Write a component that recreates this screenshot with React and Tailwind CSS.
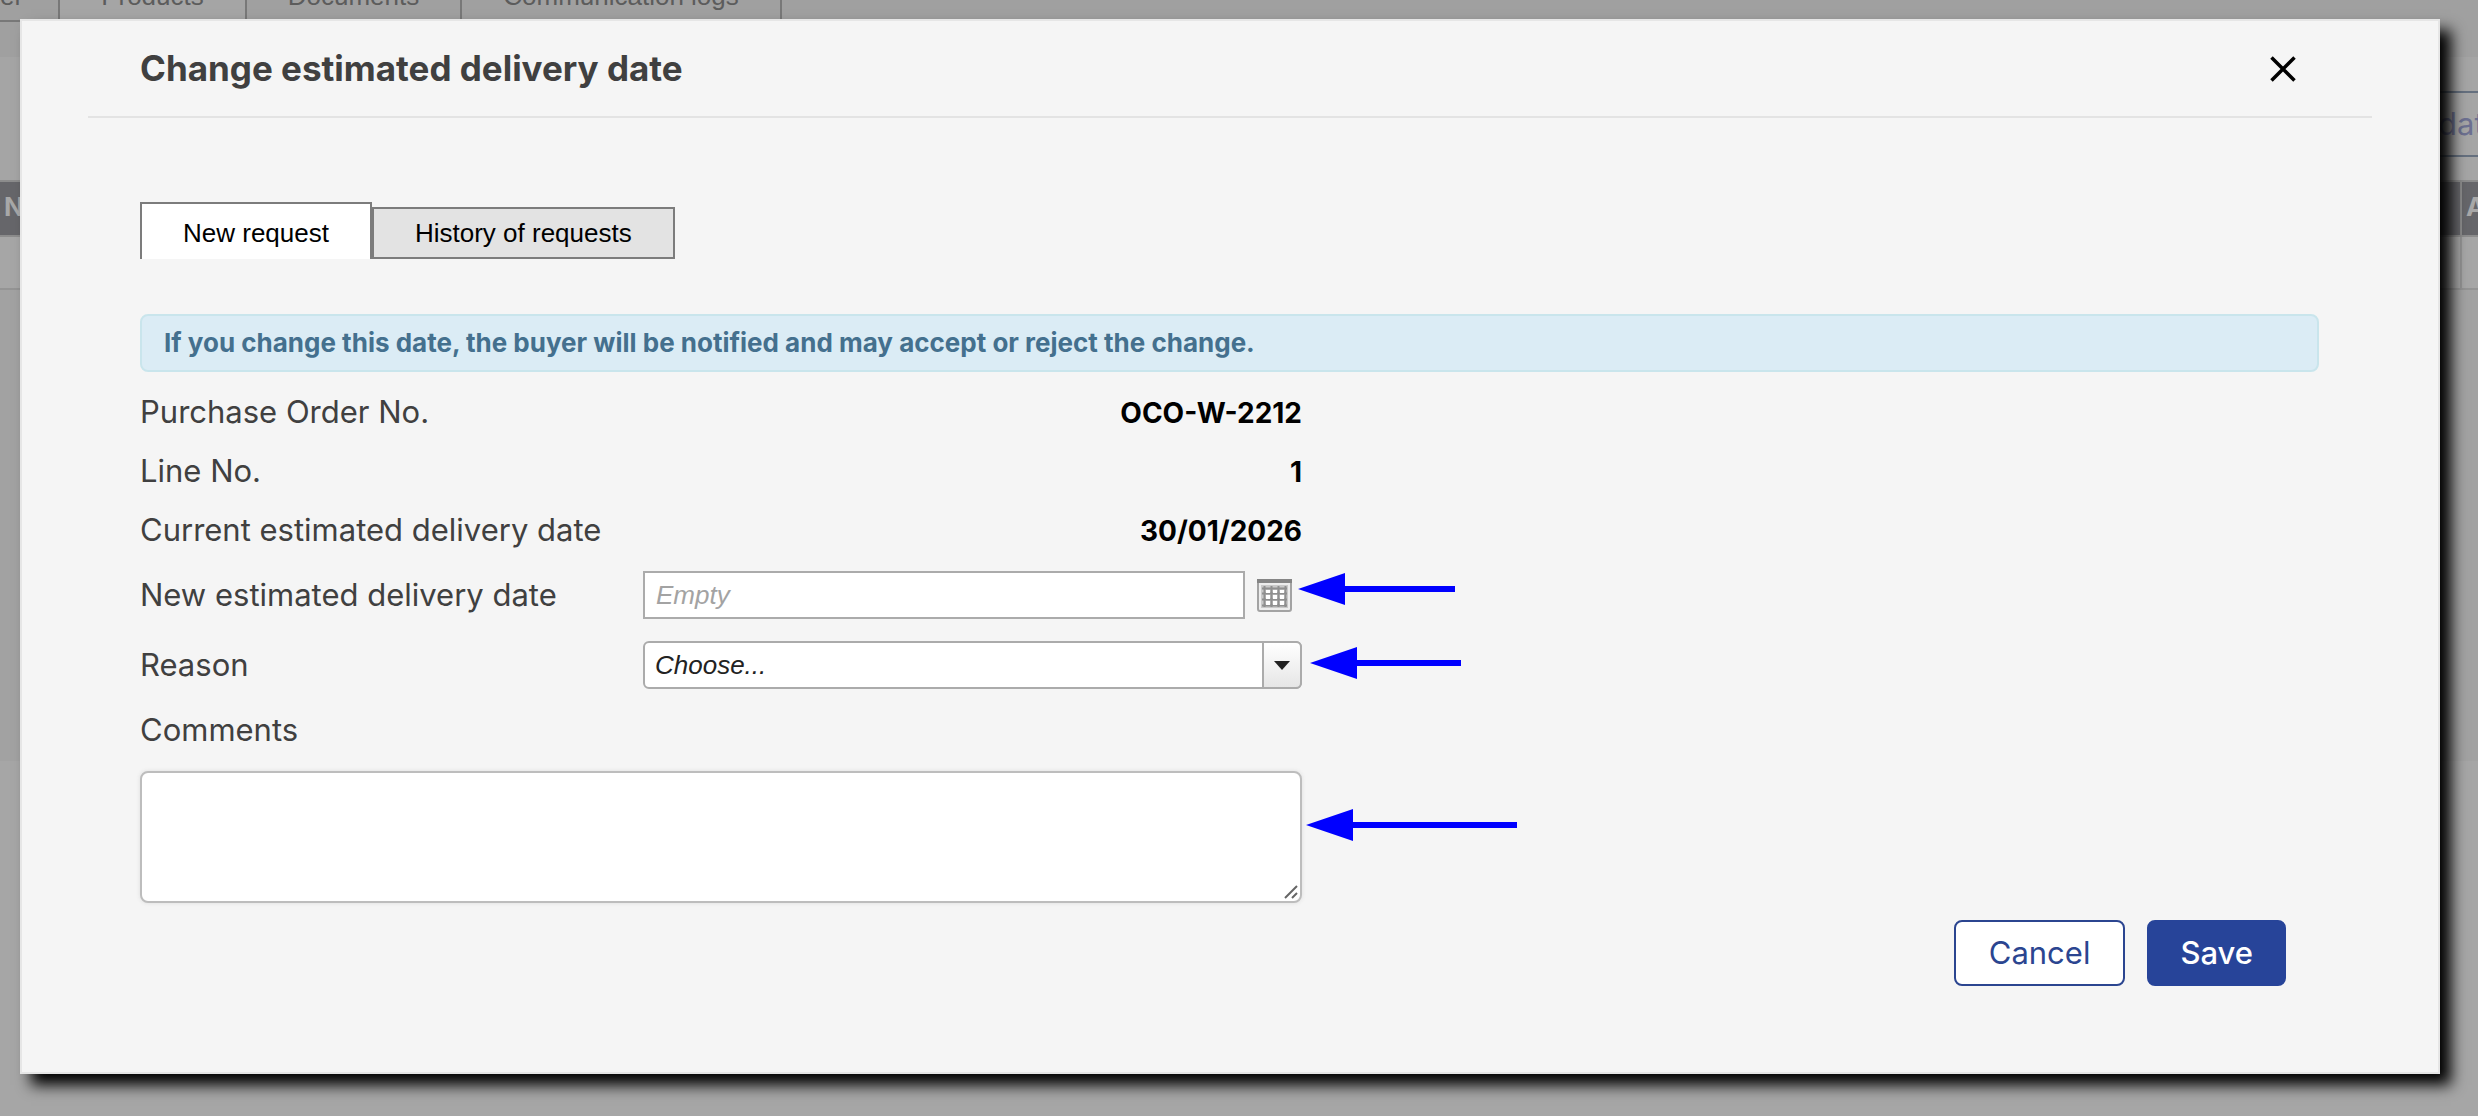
import { useState } from "react";

function Arrow({ width }) {
    return (
        <svg width={width} height="32" className="block" aria-hidden="true">
            <path d={`M0 16 L47 0 V13 H${width} V19 H47 V32 Z`} fill="#0000ff" />
        </svg>
    );
}

function CalendarIcon() {
    return (
        <svg width="35" height="33" viewBox="0 0 35 33" aria-hidden="true">
            <rect x="1" y="1" width="33" height="31" rx="2" fill="#ededed" stroke="#a3a3a3" strokeWidth="2" />
            <rect x="0" y="0" width="35" height="4" fill="#858585" />
            <rect x="4" y="6" width="27" height="23" fill="#c9c9c9" />
            <path d="M5 9.5H30M5 14.5H30M5 20.5H30M5 26.5H30M7.500 7V28M14.500 7V28M21.500 7V28M28.500 7V28" stroke="#8f8f8f" strokeWidth="2" />
            <path d="M9 11h4v3H9zM16 11h4v3h-4zM23 11h4v3h-4zM9 16h4v4H9zM16 16h4v4h-4zM23 16h4v4h-4zM9 22h4v4H9zM16 22h4v4h-4zM23 22h4v4h-4z" fill="#fff" />
        </svg>
    );
}

function InfoRow({ label, value }) {
    return (
        <div className="flex h-[59px] items-center justify-between">
            <dt>{label}</dt>
            <dd className="text-[28px] font-bold text-black">{value}</dd>
        </div>
    );
}

function BackgroundPage() {
    return (
        <div className="min-h-screen overflow-hidden bg-[#a6a6a6]" aria-hidden="true">
            <div className="h-[761px] bg-[#a2a2a2]">
                <div className="h-[57px] bg-[#a0a0a0]">
                    <div className="flex h-[22px] items-end overflow-hidden font-['Liberation_Sans',sans-serif] text-[26px] leading-[30px] text-[#5c5c5c]">
                        <div className="border-r-2 border-b-2 border-[#787878] pr-[35px] pb-[9px]">er</div>
                        <div className="border-r-2 border-[#787878] bg-[#a5a5a5] px-[41px] pb-[11px]">Products</div>
                        <div className="border-r-2 border-[#787878] px-[41px] pb-[11px]">Documents</div>
                        <div className="border-r-2 border-[#787878] px-[41px] pb-[11px]">Communication logs</div>
                    </div>
                </div>
                <div className="flex h-[123px] justify-end bg-[#a5a5a5] pt-[34px]">
                    <div className="h-[66px] w-[60px] overflow-hidden border-y-2 border-[#65707f] pl-5 text-[31px] leading-[62px] text-[#6d7191]">
                        dat
                    </div>
                </div>
                <table className="w-full table-fixed border-collapse">
                    <thead>
                        <tr className="h-[55px] border-y-2 border-[#8c8c8c] bg-[#66666a] text-left text-[26px] leading-8 text-[#a8a8a8]">
                            <th className="overflow-hidden pb-1 pl-1 font-bold">N</th>
                            <th className="w-[17px] overflow-hidden border-l-2 border-[#8c8c8c] pb-1 pl-1 font-bold">A</th>
                        </tr>
                    </thead>
                    <tbody>
                        <tr className="h-[53px] border-b-2 border-[#949494] bg-[#a6a6a6]">
                            <td></td>
                            <td className="border-l-2 border-[#949494]"></td>
                        </tr>
                    </tbody>
                </table>
            </div>
        </div>
    );
}

export default function App() {
    const [date, setDate] = useState("");
    const [comments, setComments] = useState("");

    return (
        <div className="relative overflow-hidden font-[Inter,sans-serif]">
            <BackgroundPage />

            <div className="absolute inset-0 pt-[19px] pr-[38px] pl-5">
                <div
                    role="dialog"
                    aria-labelledby="dialog-title"
                    className="border-2 border-[#e6e6e6] bg-[#f5f5f5] px-[66px] pb-[86px] text-[#404040] shadow-[11px_11px_14px_#000]"
                >
                    <header className="flex h-[97px] items-center justify-between border-b-2 border-[#e3e3e3] pr-[76px] pl-[52px]">
                        <h1 id="dialog-title" className="text-[35px] font-bold">Change estimated delivery date</h1>
                        <button type="button" aria-label="Close" className="text-black">
                            <svg width="26" height="26" viewBox="0 0 26 26" aria-hidden="true">
                                <path d="M1.500 1.500L24.500 24.500M24.500 1.500L1.500 24.500" stroke="currentColor" strokeWidth="3.500" />
                            </svg>
                        </button>
                    </header>

                    <div className="pr-[53px] pl-[52px]">
                        <div role="tablist" className="mt-[84px] flex items-end font-['Liberation_Sans',sans-serif] text-[26px] text-black">
                            <button type="button" role="tab" aria-selected="true" className="h-[57px] border-2 border-b-0 border-[#7c7c7c] bg-white px-[41px] pt-1">
                                New request
                            </button>
                            <button type="button" role="tab" aria-selected="false" className="h-[52px] border-2 border-[#7c7c7c] bg-[#e3e3e3] px-[41px]">
                                History of requests
                            </button>
                        </div>

                        <p className="mt-[55px] rounded-lg border-2 border-[#c9e5ec] bg-[#dbecf5] px-[22px] text-[26px] leading-[54px] font-bold text-[#44708e]">
                            If you change this date, the buyer will be notified and may accept or reject the change.
                        </p>

                        <form onSubmit={(e) => e.preventDefault()}>
                            <div className="w-[1162px] max-w-full pt-[11px] text-[31px]">
                                <dl>
                                    <InfoRow label="Purchase Order No." value="OCO-W-2212" />
                                    <InfoRow label="Line No." value="1" />
                                    <InfoRow label="Current estimated delivery date" value="30/01/2026" />
                                </dl>

                                <div className="relative flex h-[70px] items-center">
                                    <label htmlFor="date" className="w-[503px] shrink-0">New estimated delivery date</label>
                                    <input
                                        id="date"
                                        type="text"
                                        placeholder="Empty"
                                        value={date}
                                        onChange={(e) => setDate(e.target.value)}
                                        className="h-12 min-w-0 flex-1 border-2 border-[#ababab] bg-white px-[11px] font-['Liberation_Sans',sans-serif] text-[26px] italic placeholder:text-[#a3a3a3]"
                                    />
                                    <button type="button" aria-label="Open calendar" className="mr-2.5 ml-3">
                                        <CalendarIcon />
                                    </button>
                                    <div className="absolute top-[13px] left-full -ml-1">
                                        <Arrow width={157} />
                                    </div>
                                </div>

                                <div className="relative flex h-[70px] items-center">
                                    <label htmlFor="reason" className="w-[503px] shrink-0">Reason</label>
                                    <div className="relative flex-1">
                                        <select
                                            id="reason"
                                            className="block h-12 w-full appearance-none rounded-md border-2 border-[#ababab] bg-white pr-12 pl-2.5 font-['Liberation_Sans',sans-serif] text-[26px] text-[#222] italic"
                                        >
                                            <option>Choose...</option>
                                        </select>
                                        <div className="pointer-events-none absolute inset-y-0 right-0 flex w-10 items-center justify-center rounded-r-md border-2 border-[#ababab] bg-linear-to-b from-white to-[#e6e6e6]">
                                            <svg width="16" height="9" viewBox="0 0 16 9" aria-hidden="true">
                                                <path d="M0 0H16L8 9Z" fill="#222" />
                                            </svg>
                                        </div>
                                    </div>
                                    <div className="absolute top-[17px] left-full ml-2">
                                        <Arrow width={151} />
                                    </div>
                                </div>

                                <label htmlFor="comments" className="flex h-[61px] items-center">Comments</label>
                                <div className="relative mt-2.5">
                                    <textarea
                                        id="comments"
                                        value={comments}
                                        onChange={(e) => setComments(e.target.value)}
                                        className="block h-[132px] w-full resize-none rounded-lg border-2 border-[#bdbdbd] bg-white p-2 text-[26px] shadow-[0_0_4px_#ddd]"
                                    />
                                    <svg width="14" height="14" className="pointer-events-none absolute right-1 bottom-1" aria-hidden="true">
                                        <path d="M1 13L13 1M8 13L13 8" stroke="#666" strokeWidth="2" />
                                    </svg>
                                    <div className="absolute top-[38px] left-full ml-1">
                                        <Arrow width={211} />
                                    </div>
                                </div>
                            </div>

                            <div className="mt-[17px] mr-[33px] flex justify-end gap-[22px] text-[31px]">
                                <button type="button" className="h-[66px] rounded-lg border-2 border-[#2b4590] bg-white px-[33px] text-[#2b4590]">
                                    Cancel
                                </button>
                                <button type="submit" className="h-[66px] rounded-lg border-2 border-[#274499] bg-[#274499] px-[31px] font-medium text-white">
                                    Save
                                </button>
                            </div>
                        </form>
                    </div>
                </div>
            </div>
        </div>
    );
}
